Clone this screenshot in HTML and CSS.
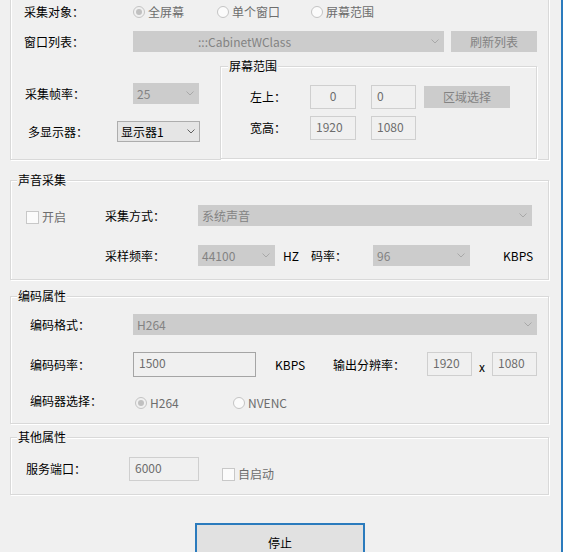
FILE: index.html
```html
<!DOCTYPE html>
<html>
<head>
<meta charset="utf-8">
<link rel="stylesheet" href="styles.css">
</head>
<body>
<div class="dialog">

  <div class="group g-capture">
    <div class="row r-obj">
      <span class="lbl lbl-obj">采集对象：</span>
      <span class="ritem ritem-full"><span class="radio checked"></span><span class="dis">全屏幕</span></span>
      <span class="ritem ritem-win"><span class="radio"></span><span class="dis">单个窗口</span></span>
      <span class="ritem"><span class="radio"></span><span class="dis">屏幕范围</span></span>
    </div>
    <div class="row r-list">
      <span class="lbl lbl-obj">窗口列表：</span>
      <div class="combo combo-list"><span class="ctext">:::CabinetWClass</span><svg class="arrow" width="8" height="5" viewBox="0 0 8 5"><path d="M0.5 0.5 L4 4 L7.5 0.5" fill="none" stroke="currentColor"/></svg></div>
      <div class="btn-dis btn-refresh">刷新列表</div>
    </div>
    <div class="split">
      <div class="left-col">
        <div class="row r-fps">
          <span class="lbl lbl-fps">采集帧率：</span>
          <div class="combo combo-fps"><span class="ctext">25</span><svg class="arrow" width="8" height="5" viewBox="0 0 8 5"><path d="M0.5 0.5 L4 4 L7.5 0.5" fill="none" stroke="currentColor"/></svg></div>
        </div>
        <div class="row r-mon">
          <span class="lbl lbl-mon">多显示器：</span>
          <div class="combo combo-on combo-mon"><span class="ctext">显示器1</span><svg class="arrow" width="8" height="5" viewBox="0 0 8 5"><path d="M0.5 0.5 L4 4 L7.5 0.5" fill="none" stroke="currentColor"/></svg></div>
        </div>
      </div>
      <div class="group inner-group">
        <span class="gtitle inner-title">屏幕范围</span>
        <div class="row ir ir-1">
          <span class="lbl lbl-ir">左上：</span>
          <div class="tb tb-a tb-center">0</div>
          <div class="tb tb-b">0</div>
          <div class="btn-dis btn-area">区域选择</div>
        </div>
        <div class="row ir ir-2">
          <span class="lbl lbl-ir">宽高：</span>
          <div class="tb tb-a">1920</div>
          <div class="tb tb-b">1080</div>
        </div>
      </div>
    </div>
  </div>

  <div class="group g-sound">
    <span class="gtitle">声音采集</span>
    <div class="row s-r1">
      <span class="citem citem-on"><span class="check"></span><span class="dis">开启</span></span>
      <span class="lbl lbl-snd">采集方式：</span>
      <div class="combo combo-mode"><span class="ctext">系统声音</span><svg class="arrow" width="8" height="5" viewBox="0 0 8 5"><path d="M0.5 0.5 L4 4 L7.5 0.5" fill="none" stroke="currentColor"/></svg></div>
    </div>
    <div class="row s-r2">
      <span class="lbl lbl-snd">采样频率：</span>
      <div class="combo combo-rate"><span class="ctext">44100</span><svg class="arrow" width="8" height="5" viewBox="0 0 8 5"><path d="M0.5 0.5 L4 4 L7.5 0.5" fill="none" stroke="currentColor"/></svg></div>
      <span class="unit unit-hz">HZ</span>
      <span class="lbl lbl-br">码率：</span>
      <div class="combo combo-br"><span class="ctext">96</span><svg class="arrow" width="8" height="5" viewBox="0 0 8 5"><path d="M0.5 0.5 L4 4 L7.5 0.5" fill="none" stroke="currentColor"/></svg></div>
      <span class="unit unit-kbps">KBPS</span>
    </div>
  </div>

  <div class="group g-enc">
    <span class="gtitle">编码属性</span>
    <div class="row e-r1">
      <span class="lbl lbl-enc">编码格式：</span>
      <div class="combo combo-fmt"><span class="ctext">H264</span><svg class="arrow" width="8" height="5" viewBox="0 0 8 5"><path d="M0.5 0.5 L4 4 L7.5 0.5" fill="none" stroke="currentColor"/></svg></div>
    </div>
    <div class="row e-r2">
      <span class="lbl lbl-enc">编码码率：</span>
      <div class="tb tb-dark tb-bitrate">1500</div>
      <span class="unit unit-kbps2">KBPS</span>
      <span class="lbl lbl-res">输出分辨率：</span>
      <div class="tb tb-res">1920</div>
      <span class="times">x</span>
      <div class="tb tb-res">1080</div>
    </div>
    <div class="row e-r3">
      <span class="lbl lbl-enc">编码器选择：</span>
      <span class="ritem ritem-h264"><span class="radio checked"></span><span class="dis">H264</span></span>
      <span class="ritem"><span class="radio"></span><span class="dis">NVENC</span></span>
    </div>
  </div>

  <div class="group g-other">
    <span class="gtitle">其他属性</span>
    <div class="row o-r1">
      <span class="lbl lbl-enc">服务端口：</span>
      <div class="tb tb-port">6000</div>
      <span class="citem citem-auto"><span class="check"></span><span class="dis">自启动</span></span>
    </div>
  </div>

  <div class="btn-stop">停止</div>
</div>
</body>
</html>
```

FILE: styles.css
```css
* { box-sizing: border-box; }
html, body { margin: 0; padding: 0; }
body {
  width: 563px;
  height: 552px;
  overflow: hidden;
  background: #f0f0f0;
  font-family: "Noto Sans CJK SC", "Noto Sans", sans-serif;
  font-size: 12px;
  line-height: 16px;
  color: #000;
}
.dialog {
  width: 563px;
  height: 552px;
  padding-left: 10px;
  border-right: 2px solid #2b7bbd;
  overflow: hidden;
}

/* group boxes */
.group {
  position: relative;
  width: 539px;
  border: 1px solid #d9d9d9;
  box-shadow: inset 1px 1px 0 #fff, 1px 1px 0 #fff;
}
.gtitle {
  position: absolute;
  top: -9px;
  left: 6px;
  padding: 0 1px;
  background: #f0f0f0;
  line-height: 16px;
  color: #000;
}
.g-capture { margin-top: -21px; height: 181px; padding-top: 20px; }
.g-sound { margin-top: 20px; height: 100px; }
.g-enc { margin-top: 16px; height: 128px; }
.g-other { margin-top: 13px; height: 58px; }

.row { display: flex; align-items: center; }
.lbl { flex: none; white-space: nowrap; }
.dis { color: #6d6d6d; }

/* radios and checkboxes */
.ritem { display: flex; align-items: center; flex: none; }
.radio {
  width: 12px;
  height: 12px;
  border-radius: 50%;
  border: 1px solid #c4c4c4;
  background: #fbfbfb;
  margin-right: 3px;
  display: flex;
  align-items: center;
  justify-content: center;
  flex: none;
}
.radio.checked { background: #f0f0f0; }
.radio.checked::after {
  content: "";
  width: 6px;
  height: 6px;
  border-radius: 50%;
  background: #c0c0c0;
}
.citem { display: flex; align-items: center; flex: none; }
.check {
  width: 13px;
  height: 13px;
  border: 1px solid #c8c8c8;
  background: #fbfbfb;
  margin-right: 3px;
  flex: none;
}

/* combo boxes */
.combo {
  display: flex;
  align-items: center;
  height: 21px;
  background: #cccccc;
  border: 1px solid #cccccc;
  color: #838383;
  padding-left: 3px;
  flex: none;
}
.combo .ctext { flex: 1; white-space: nowrap; }
.combo .arrow { margin-right: 4px; color: #a8a8a8; flex: none; }
.combo-on { background: #e5e5e5; border-color: #adadad; color: #000; }
.combo-on .arrow { color: #606060; }

/* text boxes */
.tb {
  height: 24px;
  border: 1px solid #cfcfcf;
  background: #f0f0f0;
  color: #6d6d6d;
  padding: 2px 0 0 5px;
  line-height: 16px;
  flex: none;
  white-space: nowrap;
}
.tb-center { text-align: center; padding-left: 0; }
.tb-dark { border-color: #a5a5a5; height: 25px; }

/* disabled buttons */
.btn-dis {
  display: flex;
  align-items: center;
  justify-content: center;
  background: #cccccc;
  border: 1px solid #cccccc;
  color: #838383;
  flex: none;
}

.unit { flex: none; }

/* capture group */
.r-obj { height: 24px; padding-left: 13px; }
.lbl-obj { width: 109px; }
.ritem-full { width: 84px; }
.ritem-win { width: 94px; }
.r-list { margin-top: 7px; height: 21px; padding-left: 13px; }
.combo-list { width: 311px; padding-left: 64px; }
.btn-refresh { margin-left: 7px; width: 86px; height: 21px; }
.split { display: flex; margin-top: 14px; align-items: flex-start; }
.left-col { width: 209px; flex: none; }
.r-fps { margin-top: 17px; height: 21px; padding-left: 14px; }
.lbl-fps { width: 108px; }
.combo-fps { width: 66px; }
.r-mon { margin-top: 17px; height: 21px; padding-left: 17px; }
.lbl-mon { width: 89px; }
.combo-mon { width: 83px; }

.inner-group { width: 317px; height: 93px; flex: none; }
.inner-title { left: 7px; }
.ir { height: 24px; padding-left: 29px; }
.ir-1 { margin-top: 18px; }
.ir-2 { margin-top: 7px; }
.lbl-ir { width: 60px; }
.tb-a { width: 46px; }
.tb-b { width: 45px; margin-left: 15px; }
.btn-area { margin-left: 8px; width: 86px; height: 22px; }

/* sound group */
.s-r1 { margin-top: 24px; height: 21px; padding-left: 15px; }
.citem-on { width: 79px; margin-top: 3px; }
.lbl-snd { width: 93px; }
.combo-mode { width: 334px; }
.s-r2 { margin-top: 19px; height: 21px; padding-left: 94px; }
.combo-rate { width: 77px; }
.unit-hz { margin-left: 8px; width: 28px; }
.lbl-br { width: 62px; }
.combo-br { width: 97px; }
.unit-kbps { margin-left: 33px; }

/* encoding group */
.e-r1 { margin-top: 17px; height: 21px; padding-left: 19px; }
.lbl-enc { width: 103px; }
.combo-fmt { width: 404px; }
.e-r2 { margin-top: 17px; height: 25px; padding-left: 19px; align-items: flex-start; }
.e-r2 .lbl, .e-r2 .unit, .e-r2 .times { line-height: 25px; }
.tb-bitrate { width: 123px; }
.unit-kbps2 { margin-left: 19px; width: 58px; }
.lbl-res { width: 94px; }
.tb-res { width: 45px; }
.times { width: 20px; text-align: center; flex: none; padding-top: 2px; }
.e-r3 { margin-top: 15px; height: 18px; padding-left: 19px; }
.ritem-h264 { margin-left: 2px; width: 98px; margin-top: 3px; }
.e-r3 .ritem { margin-top: 3px; }

/* other group */
.o-r1 { margin-top: 19px; height: 24px; padding-left: 15px; }
.tb-port { width: 70px; }
.citem-auto { margin-left: 23px; margin-top: 10px; }

/* stop button */
.btn-stop {
  margin-top: 28px;
  margin-left: 185px;
  width: 170px;
  height: 40px;
  border: 2px solid #2b7bbd;
  background: #e1e1e1;
  display: flex;
  align-items: center;
  justify-content: center;
  color: #000;
}
```
